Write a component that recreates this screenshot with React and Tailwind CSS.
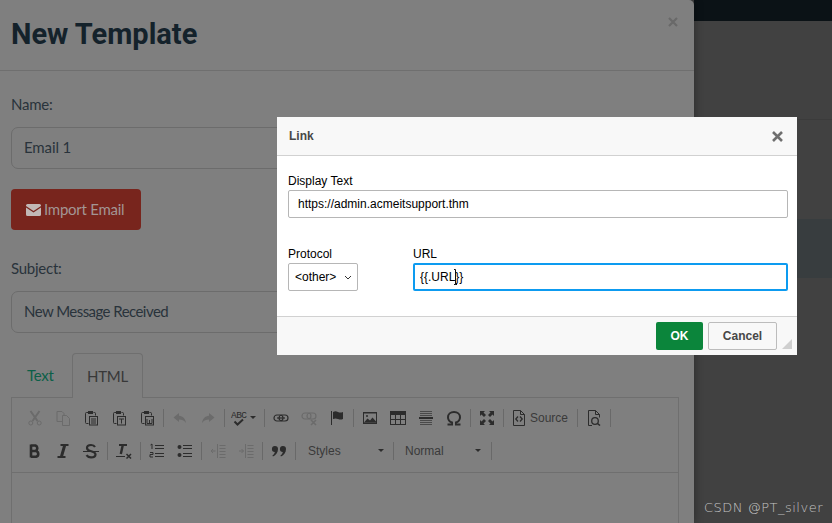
import React from "react";

const Ic = ({ children, c = "#2c2c2c", w = 16, h = 16 }) => (
  <svg width={w} height={h} viewBox={`0 0 ${w} ${h}`} fill="none" stroke={c} strokeWidth="1" style={{ color: c }}>
    {children}
  </svg>
);

const D = "#6b6b6b";
const Clip = ({ children }) => (
  <Ic>
    <path d="M5.5 2.5h-2a1 1 0 0 0-1 1v9a1 1 0 0 0 1 1h2" />
    <path d="M10.5 2.5h1a1 1 0 0 1 1 1v2" />
    <rect x="5" y="1" width="5" height="3" fill="#2c2c2c" stroke="none" />
    <rect x="6.5" y="6.5" width="8" height="8.5" />
    {children}
  </Ic>
);

const icons = {
  cut: (
    <Ic c={D}>
      <path d="M3.5 1l7 10M12.5 1l-7 10" strokeWidth="2" />
      <circle cx="3.8" cy="13" r="2" />
      <circle cx="12.2" cy="13" r="2" />
    </Ic>
  ),
  copy: (
    <Ic c={D}>
      <path d="M7.5 11.5h-5.5v-10h5l2 2v2" />
      <path d="M7.5 5.5h4l3 3v7h-7z" fill="#7f7f7f" />
    </Ic>
  ),
  paste: (
    <Clip>
      <path d="M8 9h5M8 11h5M8 13h5" />
    </Clip>
  ),
  pasteText: (
    <Clip>
      <path d="M8 9h5M10.5 9v4.5" />
    </Clip>
  ),
  pasteWord: (
    <Clip>
      <path d="M8 9v4.5h5V9M10.5 10v3" />
    </Clip>
  ),
  undo: (
    <Ic c={D}>
      <path d="M7 3L1.5 7.5 7 12V9.5c3 0 5 .8 7 3.5-.5-4-3-7-7-7.2z" fill={D} stroke="none" />
    </Ic>
  ),
  redo: (
    <Ic c={D}>
      <path d="M9 3l5.5 4.5L9 12V9.5c-3 0-5 .8-7 3.5.5-4 3-7 7-7.2z" fill={D} stroke="none" />
    </Ic>
  ),
  spell: (
    <Ic>
      <text x="0" y="8" fontFamily="'Liberation Mono', monospace" fontSize="9.5" fill="#2c2c2c" stroke="none" textLength="16">ABC</text>
      <path d="M3.5 11.5l3 3 5.5-5" strokeWidth="2" />
    </Ic>
  ),
  link: (
    <Ic>
      <rect x="1" y="5" width="9" height="6" rx="3" strokeWidth="1.2" />
      <rect x="6" y="5" width="9" height="6" rx="3" strokeWidth="1.2" />
      <path d="M4 8h8" strokeWidth="1.2" />
    </Ic>
  ),
  unlink: (
    <Ic c={D}>
      <rect x="1" y="3" width="9" height="6" rx="3" strokeWidth="1.2" />
      <rect x="6" y="3" width="9" height="6" rx="3" strokeWidth="1.2" />
      <path d="M10 10l5 5M15 10l-5 5" strokeWidth="1.6" />
    </Ic>
  ),
  flag: (
    <Ic>
      <path d="M2.500 1v14" />
      <path d="M4 2c2-1 3-1 5 0s3 .5 5 0v7c-2 .7-3 .7-5 0s-3-.7-5 0z" fill="#2c2c2c" stroke="none" />
    </Ic>
  ),
  image: (
    <Ic>
      <rect x="1" y="2" width="14" height="12" fill="#2c2c2c" stroke="none" />
      <rect x="2" y="3.500" width="12" height="9" fill="#7f7f7f" stroke="none" />
      <path d="M2 12.500l3.500-4 2.500 2 2.500-3 3.500 4v1H2z" fill="#2c2c2c" stroke="none" />
      <circle cx="5" cy="6" r="1" fill="#2c2c2c" stroke="none" />
    </Ic>
  ),
  table: (
    <Ic>
      <rect x="0.500" y="1.500" width="15" height="13" />
      <rect x="0" y="1" width="16" height="4" fill="#2c2c2c" stroke="none" />
      <path d="M5.500 5v9M10.500 5v9M1 9.500h14" />
    </Ic>
  ),
  hr: (
    <Ic>
      <path d="M2 1.500h12M2 3.500h12M2 5.500h12M2 10.500h12M2 12.500h12M2 14.500h12" stroke="#4a4a4a" />
      <path d="M1 8h14" strokeWidth="2" />
    </Ic>
  ),
  omega: (
    <Ic>
      <path d="M1.500 14.500h4.500v-2C3.200 11.500 2 9.500 2 7.200 2 4 4.500 2 8 2s6 2 6 5.200c0 2.300-1.200 4.300-4 5.300v2h4.500" strokeWidth="2" />
    </Ic>
  ),
  maximize: (
    <Ic>
      <path d="M1 1h5L4.500 2.500 7 5 5 7 2.500 4.500 1 6zM15 1h-5l1.500 1.500L9 5l2 2 2.500-2.500L15 6zM1 15h5l-1.500-1.500L7 11 5 9l-2.500 2.500L1 10zM15 15h-5l1.500-1.500L9 11l2-2 2.500 2.500L15 10z" fill="#2c2c2c" stroke="none" />
    </Ic>
  ),
  source: (
    <Ic>
      <path d="M2.500 15.500v-15h7l4 4v11z" />
      <path d="M9.500.5v4h4" />
      <path d="M7 6.500L4.800 9 7 11.500M9 6.500L11.200 9 9 11.500" strokeWidth="1.300" />
    </Ic>
  ),
  preview: (
    <Ic>
      <path d="M6 15.500H2.500V.5h7l4 4v3" />
      <path d="M9.500.5v4h4" />
      <circle cx="9" cy="11" r="3.300" strokeWidth="1.300" />
      <path d="M11.500 13.500l2.500 2" strokeWidth="1.600" />
    </Ic>
  ),
  bold: (
    <Ic>
      <path d="M4 2.500h4.500a3 3 0 0 1 0 5.500H4M4 8h5a3 3 0 0 1 0 5.800H4M4 1.500v13" strokeWidth="2.600" />
    </Ic>
  ),
  italic: (
    <Ic>
      <path d="M9.800 1.800L6.300 14.200" strokeWidth="3" />
      <path d="M5.500 2h8M2.500 14h8" strokeWidth="2" />
    </Ic>
  ),
  strike: (
    <Ic>
      <path d="M12 4c-.7-1.300-2-2-4-2-2.500 0-4 1-4 3 0 4.500 8.500 2 8.500 6.500 0 1.800-1.600 2.900-4.500 2.900-2.200 0-3.600-.8-4.500-2.200" strokeWidth="2.200" />
      <path d="M0 8.500h16" />
    </Ic>
  ),
  removeFormat: (
    <Ic>
      <path d="M6.800 2L4.800 11" strokeWidth="2.400" />
      <path d="M3 2h8" strokeWidth="2" />
      <path d="M0 13.500h9" strokeWidth="1" />
      <path d="M10.500 11l4.500 4.500M15 11l-4.500 4.500" strokeWidth="1.500" />
    </Ic>
  ),
  ol: (
    <Ic>
      <path d="M1.500 2l1.500-1v5M1 9.500h3v2H1v2.500h3" />
      <path d="M6 2.500h9M6 5.500h9M6 10.500h9M6 13.500h9" strokeWidth="1.200" />
    </Ic>
  ),
  ul: (
    <Ic>
      <circle cx="2.500" cy="4" r="2" fill="#2c2c2c" stroke="none" />
      <circle cx="2.500" cy="12" r="2" fill="#2c2c2c" stroke="none" />
      <path d="M6 2.500h9M6 5.500h9M6 10.500h9M6 13.500h9" strokeWidth="1.200" />
    </Ic>
  ),
  outdent: (
    <Ic c={D}>
      <path d="M7.500 1v14M9.500 2.500h6M9.500 5.500h6M9.500 8.500h6M9.500 11.500h6M9.500 14.500h6" />
      <path d="M5.500 8H1M3 6L1 8l2 2" />
    </Ic>
  ),
  indent: (
    <Ic c={D}>
      <path d="M7.500 1v14M9.500 2.500h6M9.500 5.500h6M9.500 8.500h6M9.500 11.500h6M9.500 14.500h6" />
      <path d="M1 8h4.500M3.500 6l2 2-2 2" />
    </Ic>
  ),
  quote: (
    <Ic>
      <path d="M4 3a3 3 0 0 1 3 3c0 3.500-2 6-5 7.500l-.6-.9C3 11.500 3.600 10.200 3.800 9A3 3 0 0 1 4 3zM12 3a3 3 0 0 1 3 3c0 3.500-2 6-5 7.500l-.6-.9c1.600-1.100 2.200-2.400 2.400-3.600A3 3 0 0 1 12 3z" fill="#2c2c2c" stroke="none" />
    </Ic>
  ),
};

const Btn = ({ name }) => (
  <div className="w-7 h-[33px] flex items-center justify-center shrink-0">{icons[name]}</div>
);
const Sep = () => <div className="mx-[2px] w-px h-[18px] bg-[#696969] shrink-0" />;
const Caret = () => <div className="w-0 h-0 border-x-[3px] border-x-transparent border-t-[3px] border-t-[#2c2c2c]" />;

const Combo = ({ label, w, caretGap }) => (
  <div className={`${w} h-[33px] flex items-center shrink-0 text-[12px] text-[#3a3a3a] font-['Liberation_Sans',sans-serif]`}>
    <span className={caretGap}>{label}</span>
    <Caret />
  </div>
);

const Field = ({ value, track }) => (
  <input
    readOnly
    defaultValue={value}
    className={`block w-full h-[42px] mt-[11px] px-[12px] pb-[2px] border border-[#6c6c6c] rounded-[7px] bg-transparent text-[15px] text-[#29333b] outline-none ${track}`}
  />
);

const LABEL = "h-6 leading-6 text-[15px] tracking-[-0.25px] text-[#29333b]";

export default function App() {
  return (
    <div className="relative flex w-[832px] h-[523px] overflow-hidden bg-[#414141] font-['Lato',sans-serif]">
      <main className="relative z-10 w-[694px] h-[523px] shrink-0 bg-[#7f7f7f] rounded-tr-[5px] shadow-[0_0_10px_rgba(0,0,0,0.35)]">
        <header className="h-[71px] border-b border-[#6f6f6f] pl-[11px] pr-[16px] flex items-center justify-between">
          <h1 className="text-[29px] leading-none font-['Roboto',sans-serif] font-bold text-[#14222b] -mt-[1px]">New Template</h1>
          <svg width="10" height="10" viewBox="0 0 10 10" stroke="#696969" strokeWidth="2.200" className="-mt-[26px]">
            <path d="M1 1l8 8M9 1l-8 8" />
          </svg>
        </header>
        <div className="pl-[11px] pr-[15px] pt-[21px]">
          <div className={LABEL}>Name:</div>
          <Field value="Email 1" track="tracking-[-0.1px]" />
          <button className="flex items-center gap-[3px] mt-[20px] w-[130px] h-[41px] pl-[15px] bg-[#78251d] rounded-[4px] text-[15px] tracking-[-0.25px] whitespace-nowrap text-[#a39694]">
            <svg width="15" height="12" viewBox="0 0 15 12" fill="#c2b8b6">
              <path d="M0 1.500A1.500 1.500 0 0 1 1.500 0h12A1.500 1.500 0 0 1 15 1.500v.5L7.500 7 0 2zM0 3.500l7.500 5 7.500-5v7a1.500 1.500 0 0 1-1.500 1.500h-12A1.500 1.500 0 0 1 0 10.500z" />
            </svg>
            Import Email
          </button>
          <div className={`${LABEL} mt-[26px]`}>Subject:</div>
          <Field value="New Message Received" track="tracking-[-0.55px]" />
          <nav className="flex mt-[20px] h-[44px] text-[15px] tracking-[-0.25px]">
            <div className="w-[61px] pl-[16px] pt-[11px] text-[#0c5f48]">Text</div>
            <div className="w-[71px] h-[45px] border border-b-0 border-[#6f6f6f] rounded-t-[4px] text-center pt-[11px] text-[#383838] bg-[#7f7f7f] relative">HTML</div>
          </nav>
          <section className="border-x border-[#6f6f6f] h-[200px]">
            <div className="border-y border-[#6f6f6f] h-[76px] pl-[9px] pt-[3px]">
              <div className="flex items-center h-[33px]">
                <Btn name="cut" /><Btn name="copy" /><Btn name="paste" /><Btn name="pasteText" /><Btn name="pasteWord" /><Sep />
                <Btn name="undo" /><Btn name="redo" /><Sep />
                <div className="w-[35px] h-[33px] flex items-center pl-[4px] gap-[3px] shrink-0">{icons.spell}<Caret /></div><Sep />
                <Btn name="link" /><Btn name="unlink" /><Btn name="flag" /><Sep />
                <Btn name="image" /><Btn name="table" /><Btn name="hr" /><Btn name="omega" /><Sep />
                <Btn name="maximize" /><Sep />
                <div className="w-[69px] h-[33px] flex items-center pl-[5px] gap-[3px] shrink-0 text-[12px] text-[#3a3a3a] font-['Liberation_Sans',sans-serif]">{icons.source}<span className="mt-[1px]">Source</span></div><Sep />
                <Btn name="preview" /><Sep />
              </div>
              <div className="flex items-center h-[33px]">
                <Btn name="bold" /><Btn name="italic" /><Btn name="strike" /><Sep />
                <Btn name="removeFormat" /><Sep />
                <Btn name="ol" /><Btn name="ul" /><Sep />
                <Btn name="outdent" /><Btn name="indent" /><Sep />
                <Btn name="quote" /><Sep />
                <Combo label="Styles" w="w-[93px] pl-[10px]" caretGap="w-[70px]" /><Sep />
                <Combo label="Normal" w="w-[93px] pl-[9px]" caretGap="w-[70px]" /><Sep />
              </div>
            </div>
          </section>
        </div>
      </main>

      <aside className="flex-1 flex flex-col">
        <div className="h-[21px] bg-[#0b1216]" />
        <div className="h-[99px] border-b border-[#3b3b3b]" />
        <div className="h-[99px]" />
        <div className="h-[59px] bg-[#383d3f]" />
      </aside>

      <div className="absolute z-20 left-[277px] top-[117px] w-[520px] h-[238px] bg-white flex flex-col font-['Liberation_Sans',sans-serif] text-[12px] text-black">
        <div className="h-[39px] shrink-0 bg-[#f8f8f8] border-b border-[#d1d1d1] flex items-center justify-between pl-[12px] pr-[14px]">
          <span className="font-bold text-[#474747]">Link</span>
          <svg width="11" height="11" viewBox="0 0 11 11" stroke="#6f6f6f" strokeWidth="2.600">
            <path d="M1 1l9 9M10 1l-9 9" />
          </svg>
        </div>
        <div className="flex-1 pl-[11px] pr-[9px] pt-[18px]">
          <div className="h-[16px] leading-[15px]">Display Text</div>
          <input readOnly defaultValue="https://admin.acmeitsupport.thm" className="block w-full h-[28px] px-[9px] border border-[#b6b6b6] rounded-[2px] outline-none text-[12px]" />
          <div className="flex gap-[55px] mt-[28px]">
            <div className="relative w-[70px]">
              <div className="h-[16px] leading-[17px]">Protocol</div>
              <select className="block w-[70px] h-[28px] mt-[1px] pl-[6px] appearance-none border border-[#b6b6b6] rounded-[2px] bg-white outline-none text-[12px]" defaultValue="other">
                <option value="other">&lt;other&gt;</option>
              </select>
              <svg width="8" height="5" viewBox="0 0 8 5" fill="none" stroke="#333" strokeWidth="1" className="absolute left-[56px] top-[29px]">
                <path d="M1 1l3 3 3-3" />
              </svg>
            </div>
            <div className="relative flex-1">
              <div className="h-[16px] leading-[17px]">URL</div>
              <input readOnly defaultValue="{{.URL}}" className="block w-full h-[28px] mt-[1px] px-[5px] border-2 border-[#0d9bf0] rounded-[2px] outline-none text-[12px]" />
              <svg width="5" height="16" viewBox="0 0 5 16" stroke="#111" strokeWidth="1" fill="none" className="absolute left-[40px] top-[23px]">
                <path d="M1 .5h1.500v15H1M2.500 15.500H4" />
              </svg>
            </div>
          </div>
        </div>
        <div className="relative h-[39px] shrink-0 bg-[#f8f8f8] border-t border-[#d1d1d1] flex justify-end items-start gap-[5px] pt-[5px] pr-[20px]">
          <button className="w-[47px] h-[28px] bg-[#0b853b] rounded-[2px] font-bold text-white">OK</button>
          <button className="w-[69px] h-[28px] bg-[#f8f8f8] border border-[#bcbcbc] rounded-[2px] font-bold text-[#474747]">Cancel</button>
          <div className="absolute right-[5px] bottom-[6px] w-0 h-0 border-l-[10px] border-l-transparent border-b-[10px] border-b-[#cfcfcf]" />
        </div>
      </div>

      <div className="absolute z-30 left-[704px] top-[500px] text-[13px] leading-4 tracking-[0.5px] text-[#c4c4c4] whitespace-pre font-['DejaVu_Sans',sans-serif] font-extralight">CSDN @PT_silver</div>
    </div>
  );
}
